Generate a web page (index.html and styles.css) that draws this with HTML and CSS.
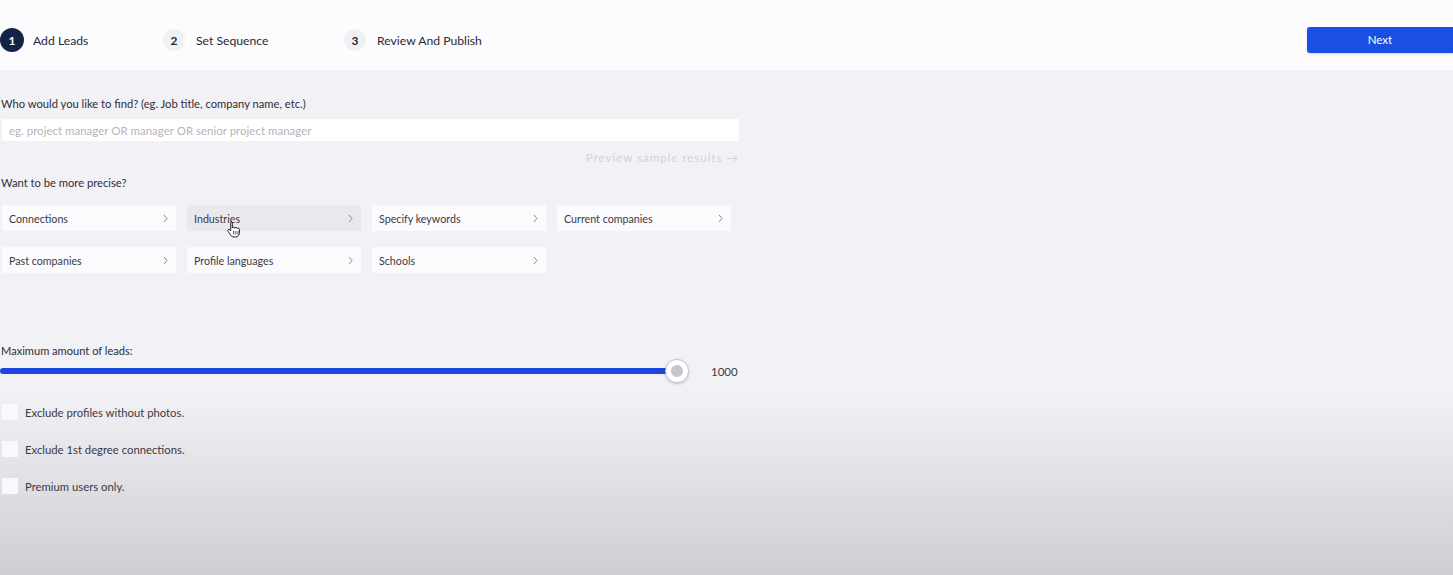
FILE: index.html
```html
<!DOCTYPE html>
<html>
<head>
    <title>Add Leads</title>
    <link rel="stylesheet" href="styles.css">
</head>
<body>
    <div class="header">
        <div class="steps">
            <div class="step active"><span class="num">1</span>Add Leads</div>
            <div class="step"><span class="num">2</span>Set Sequence</div>
            <div class="step"><span class="num">3</span>Review And Publish</div>
        </div>
        <button class="btn-next">Next</button>
    </div>

    <div class="content">
        <label class="label">Who would you like to find? (eg. Job title, company name, etc.)</label>
        <input type="text" class="search" placeholder="eg. project manager OR manager OR senior project manager">
        <div class="preview">Preview sample results &#8594;</div>

        <div class="label precise">Want to be more precise?</div>
        <div class="filters">
            <div class="chip">Connections<svg class="chev" width="5" height="9" viewBox="0 0 5 9"><path d="M1 1l3 3.5L1 8" fill="none" stroke="#8a8a92" stroke-width="1"/></svg></div>
            <div class="chip hover">Industries<svg class="chev" width="5" height="9" viewBox="0 0 5 9"><path d="M1 1l3 3.5L1 8" fill="none" stroke="#8a8a92" stroke-width="1"/></svg>
                <svg class="cursor" width="14" height="18" viewBox="0 0 14 18">
                    <path d="M4 1.5c.8 0 1.3.6 1.3 1.3v5.2c.2-.6.7-.9 1.3-.9.7 0 1.2.5 1.2 1.1.2-.5.7-.8 1.2-.8.7 0 1.2.5 1.2 1.2.2-.3.6-.5 1-.5.7 0 1.2.5 1.2 1.2v3.4c0 2.4-1.6 4.3-4 4.3H7c-1.5 0-2.5-.7-3.3-1.8L1 11.2c-.4-.6-.3-1.3.2-1.6.5-.4 1.2-.3 1.6.2l.9 1.1V2.8c0-.7.5-1.3 1.3-1.3z" fill="#fff" stroke="#222" stroke-width="1"/>
                    <path d="M6.6 11v3.5M8.8 11v3.5M11 11v3.5" stroke="#222" stroke-width=".8"/>
                </svg>
            </div>
            <div class="chip">Specify keywords<svg class="chev" width="5" height="9" viewBox="0 0 5 9"><path d="M1 1l3 3.5L1 8" fill="none" stroke="#8a8a92" stroke-width="1"/></svg></div>
            <div class="chip">Current companies<svg class="chev" width="5" height="9" viewBox="0 0 5 9"><path d="M1 1l3 3.5L1 8" fill="none" stroke="#8a8a92" stroke-width="1"/></svg></div>
            <div class="chip">Past companies<svg class="chev" width="5" height="9" viewBox="0 0 5 9"><path d="M1 1l3 3.5L1 8" fill="none" stroke="#8a8a92" stroke-width="1"/></svg></div>
            <div class="chip">Profile languages<svg class="chev" width="5" height="9" viewBox="0 0 5 9"><path d="M1 1l3 3.5L1 8" fill="none" stroke="#8a8a92" stroke-width="1"/></svg></div>
            <div class="chip">Schools<svg class="chev" width="5" height="9" viewBox="0 0 5 9"><path d="M1 1l3 3.5L1 8" fill="none" stroke="#8a8a92" stroke-width="1"/></svg></div>
        </div>

        <div class="label max">Maximum amount of leads:</div>
        <div class="slider-row">
            <div class="track"><span class="thumb"></span></div>
            <span class="value">1000</span>
        </div>

        <div class="checks">
            <label class="check"><span class="box"></span>Exclude profiles without photos.</label>
            <label class="check"><span class="box"></span>Exclude 1st degree connections.</label>
            <label class="check"><span class="box"></span>Premium users only.</label>
        </div>
    </div>
</body>
</html>
```

FILE: styles.css
```css
html { height: 100%; }
body { margin: 0; min-height: 100%; font-family: Lato, "Open Sans", Arial, sans-serif; color: #3a3a44;
    background: linear-gradient(to bottom, #f2f1f5 0px, #f2f1f5 390px, #cfced3 575px); }
.header { height: 60px; padding-top: 10px; background: #fcfbfe; display: flex; align-items: center; justify-content: space-between; }
.steps { display: flex; }
.step { display: flex; align-items: center; font-size: 12.2px; color: #2a2a33; }
.step:nth-child(1) { width: 163px; }
.step:nth-child(2) { width: 181px; }
.num { width: 22px; height: 22px; border-radius: 50%; background: #f1f0f5; display: flex; align-items: center; justify-content: center; font-weight: 700; font-size: 12px; margin-right: 11px; color: #2a2a33; }
.step.active .num { width: 24px; height: 24px; background: #132447; color: #fff; margin-right: 9px; }
.btn-next { width: 146px; height: 26px; margin-top: -1px; background: #1a4fe3; color: #fff; border: none; border-radius: 3px 0 0 3px; font-family: inherit; font-size: 11.5px; box-shadow: 0 1px 2px rgba(0,0,0,0.15); }
.content { width: 738px; padding: 27px 0 0 1px; }
.label { display: block; font-size: 11.2px; line-height: 14px; color: #2e2e36; }
.search { display: block; box-sizing: border-box; width: 737px; height: 22px; margin: 8px 0 0 1px; border: none; background: #fff; padding: 0 7px; font-family: inherit; font-size: 11.5px; }
.search::placeholder { color: #b4b4bc; }
.preview { text-align: right; font-size: 11.5px; line-height: 14px; color: #d2d1d8; letter-spacing: 1px; margin-top: 10px; }
.precise { margin-top: 11px; }
.filters { display: grid; grid-template-columns: repeat(4, 174px); gap: 16px 11px; margin-top: 15px; padding-left: 1px; }
.chip { position: relative; height: 26px; background: #fbfafd; display: flex; align-items: center; justify-content: space-between; padding: 0 8px 0 7px; font-size: 10.7px; color: #3a3a44; box-sizing: border-box; }
.chip.hover { background: #e9e8ef; }
.cursor { position: absolute; left: 40px; top: 15px; }
.max { margin-top: 71px; font-size: 11.1px; }
.slider-row { display: flex; align-items: center; height: 22px; margin-top: 2px; margin-left: -1px; }
.track { position: relative; width: 677px; height: 6px; background: #1b45dd; border-radius: 3px; }
.thumb { position: absolute; right: -12px; top: -9px; width: 24px; height: 24px; box-sizing: border-box; border-radius: 50%; border: 1px solid #c3c2c9; background: radial-gradient(circle, #c6c5cb 0 5.5px, #fff 6.5px); box-shadow: 0 1px 3px rgba(0,0,0,0.2); }
.value { margin-left: 34px; font-size: 11.5px; color: #3a3a44; }
.checks { margin-top: 22px; }
.check { display: flex; align-items: center; font-size: 11.3px; color: #3a3a44; height: 16px; margin-bottom: 21px; }
.box { width: 16px; height: 16px; background: #f9f8fb; margin-right: 7px; margin-left: 1px; }
```
